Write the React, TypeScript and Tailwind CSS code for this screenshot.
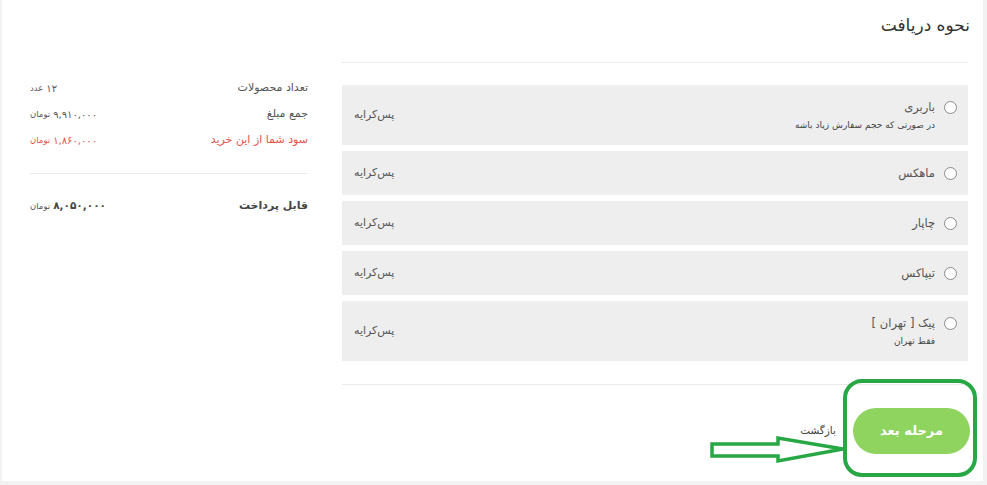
import React from "react";

const font = { fontFamily: '"DejaVu Sans", "Noto Sans", sans-serif' };

type Opt = { name: string; sub?: string };
const options: Opt[] = [
  { name: "باربری", sub: "در صورتی که حجم سفارش زیاد باشه" },
  { name: "ماهکس" },
  { name: "چاپار" },
  { name: "تیپاکس" },
  { name: "پیک [ تهران ]", sub: "فقط تهران" },
];

function Row({ o }: { o: Opt }) {
  return (
    <div
      className={`flex items-center justify-between bg-[#eeeeee] pr-[11px] pl-[12px] ${o.sub ? "h-[60px]" : "h-[44px]"}`}
    >
      <div className="flex flex-col">
        <div className="flex items-center gap-[9px] leading-[20px]">
          <span className="inline-block w-[13px] h-[13px] rounded-full border border-[#8a8a8a] bg-white" />
          <span className="text-[11.5px] text-[#555]">{o.name}</span>
        </div>
        {o.sub && (
          <div className="pr-[22px] text-[9px] leading-[16px] text-[#444]">{o.sub}</div>
        )}
      </div>
      <div className="text-[11px] text-[#555]">پس‌کرایه</div>
    </div>
  );
}

function Line({
  label,
  value,
  unit,
  red,
  bold,
}: {
  label: string;
  value: string;
  unit: string;
  red?: boolean;
  bold?: boolean;
}) {
  const c = red ? "text-[#e8514a]" : "text-[#555]";
  return (
    <div className="flex items-center justify-between h-[26px]">
      <span className={`${bold ? "text-[11px] font-bold text-[#444]" : `text-[11px] ${c}`}`}>{label}</span>
      <span className={`flex items-center gap-[3px] ${c}`}>
        <span className={bold ? "text-[10.5px] font-bold text-[#444]" : "text-[10px]"}>{value}</span>
        <span className="text-[8.5px]">{unit}</span>
      </span>
    </div>
  );
}

export default function App() {
  return (
    <div className="relative w-[987px] h-[485px] bg-[#f2f2f2] overflow-hidden" style={font}>
      <div dir="rtl" className="ml-[2px] w-[981px] h-[481px] bg-white flex pr-[15px] pl-[28px] gap-[34px]">
        <div className="w-[626px] flex flex-col">
          <h2 className="mt-[11px] mr-[-2px] text-[17px] leading-[28px] font-normal text-[#333]">نحوه دریافت</h2>
          <div className="mt-[23px] h-px bg-[#ebebeb]" />
          <div className="mt-[22px] flex flex-col gap-[6px]">
            {options.map((o) => (
              <Row key={o.name} o={o} />
            ))}
          </div>
          <div className="mt-[23px] h-px bg-[#ebebeb]" />
          <div className="mt-[23px] flex items-center gap-[17px] -mr-[2px]">
            <button className="w-[117px] h-[46px] rounded-full bg-[#8ed45e] text-white text-[13px] font-bold">
              مرحله بعد
            </button>
            <span className="text-[10.5px] text-[#444]">بازگشت</span>
          </div>
        </div>
        <div className="w-[278px] flex flex-col pt-[75px]">
          <Line label="تعداد محصولات" value="۱۲" unit="عدد" />
          <Line label="جمع مبلغ" value="۹,۹۱۰,۰۰۰" unit="تومان" />
          <Line label="سود شما از این خرید" value="۱,۸۶۰,۰۰۰" unit="تومان" red />
          <div className="mt-[20px] h-px bg-[#ebebeb]" />
          <div className="mt-[19px]">
            <Line label="قابل پرداخت" value="۸,۰۵۰,۰۰۰" unit="تومان" bold />
          </div>
        </div>
      </div>
      <svg
        className="absolute inset-0 pointer-events-none"
        width="987"
        height="485"
        viewBox="0 0 987 485"
      >
        <rect x="845" y="381" width="130" height="94" rx="17" fill="none" stroke="#28a745" strokeWidth="4" />
        <polygon
          points="712,444 778,444 778,438 843,449 778,461 778,456 712,456"
          fill="none"
          stroke="#28a745"
          strokeWidth="3.5"
          strokeLinejoin="miter"
        />
      </svg>
    </div>
  );
}
